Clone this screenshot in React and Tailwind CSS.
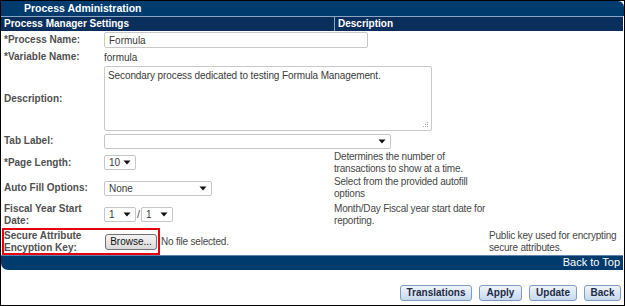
import React from 'react'

const font = { fontFamily: '"Liberation Sans", Arial, sans-serif' }

function Select({ value, width }) {
  return (
    <div
      className={`flex h-[15px] items-center justify-between rounded-[2px] border border-[#c6c6c6] bg-white pl-[4px] pr-[4px] text-[10px] text-[#3a3a3a] ${width}`}
    >
      <span>{value}</span>
      <svg width="8" height="5" viewBox="0 0 8 5">
        <path d="M0.5 0.5 H7.5 L4 4.5 Z" fill="#111" />
      </svg>
    </div>
  )
}

function Label({ children }) {
  return <div className="pl-[3px] text-[10px] font-bold leading-[12px] text-[#505050]">{children}</div>
}

function Desc({ children, className = '' }) {
  return <div className={`text-[10px] leading-[12px] tracking-[-0.2px] text-[#474747] ${className}`}>{children}</div>
}

function ActionButton({ children, width }) {
  return (
    <button
      className={`h-[16px] rounded-[3px] border border-[#7f9cc3] bg-gradient-to-b from-[#eef4fb] to-[#c8d8ed] text-[10px] font-bold leading-[14px] text-[#1d2c44] ${width}`}
    >
      {children}
    </button>
  )
}

export default function App() {
  return (
    <div style={font} className="h-[306px] w-[625px] border border-black bg-white">
      {/* title */}
      <div className="h-[15px] rounded-tr-[6px] bg-[#003b6e] pl-[23px] text-[10.5px] font-bold leading-[15px] text-white">
        Process Administration
      </div>
      <div className="mr-[1px] h-[1px] bg-[#8aa4c3]" />
      <div className="mr-[1px] grid h-[14px] grid-cols-[333px_1fr] bg-[#0b2f5d] text-[10px] font-bold leading-[14px] text-white">
        <div className="pl-[3px]">Process Manager Settings</div>
        <div className="border-l border-[#8aa4c3] pl-[3px]">Description</div>
      </div>

      {/* rows */}
      <div className="grid grid-cols-[103px_230px_1fr]">
        <div className="flex h-[18px] items-center"><Label>*Process Name:</Label></div>
        <div className="col-span-2 flex items-center">
          <div className="flex h-[16px] w-[264px] items-center rounded-[2px] border border-[#c9c9c9] pl-[4px] text-[10px] text-[#3a3a3a]">
            Formula
          </div>
        </div>

        <div className="flex h-[16px] items-center"><Label>*Variable Name:</Label></div>
        <div className="col-span-2 flex items-center text-[10px] text-[#3a3a3a]">formula</div>

        <div className="flex h-[67px] items-center"><Label>Description:</Label></div>
        <div className="col-span-2 flex items-center">
          <div className="relative h-[65px] w-[328px] rounded-[2px] border border-[#c9c9c9] px-[3px] pt-[3px] text-[10px] leading-[12px] tracking-[-0.1px] text-[#3a3a3a]">
            Secondary process dedicated to testing Formula Management.
            <svg className="absolute bottom-[2px] right-[2px]" width="6" height="6" viewBox="0 0 6 6">
              <rect x="4" y="0" width="1" height="1" fill="#aaa" />
              <rect x="2" y="2" width="1" height="1" fill="#aaa" />
              <rect x="4" y="2" width="1" height="1" fill="#aaa" />
              <rect x="0" y="4" width="1" height="1" fill="#aaa" />
              <rect x="2" y="4" width="1" height="1" fill="#aaa" />
              <rect x="4" y="4" width="1" height="1" fill="#aaa" />
            </svg>
          </div>
        </div>

        <div className="flex h-[18px] items-center"><Label>Tab Label:</Label></div>
        <div className="col-span-2 flex items-center">
          <Select value="" width="w-[287px]" />
        </div>

        <div className="flex h-[25px] items-center"><Label>*Page Length:</Label></div>
        <div className="flex items-center"><Select value="10" width="w-[32px]" /></div>
        <div className="flex items-center">
          <Desc>
            Determines the number of<br />transactions to show at a time.
          </Desc>
        </div>

        <div className="flex h-[26px] items-center"><Label>Auto Fill Options:</Label></div>
        <div className="flex items-center"><Select value="None" width="w-[108px]" /></div>
        <div className="flex items-center">
          <Desc>
            Select from the provided autofill<br />options
          </Desc>
        </div>

        <div className="flex h-[27px] items-center">
          <Label>
            Fiscal Year Start<br />Date:
          </Label>
        </div>
        <div className="flex items-center gap-[1px]">
          <Select value="1" width="w-[32px]" />
          <span className="text-[11px] text-[#555]">/</span>
          <Select value="1" width="w-[32px]" />
        </div>
        <div className="flex items-center">
          <Desc>
            Month/Day Fiscal year start date for<br />reporting.
          </Desc>
        </div>

        <div className="relative col-span-3 grid h-[27px] grid-cols-[103px_230px_1fr]">
          <div className="flex items-center">
            <Label>
              Secure Attribute<br />Encyption Key:
            </Label>
          </div>
          <div className="flex items-center gap-[4px] pl-[1px]">
            <button className="h-[16px] w-[52px] rounded-[3px] border border-[#707070] bg-gradient-to-b from-[#f4f4f4] to-[#d9d9d9] text-[10px] leading-[14px] text-[#111]">
              Browse...
            </button>
            <span className="text-[10px] tracking-[-0.2px] text-[#474747]">No file selected.</span>
          </div>
          <div className="flex items-center pl-[155px]">
            <Desc>
              Public key used for encrypting<br />secure attributes.
            </Desc>
          </div>
          <div className="pointer-events-none absolute left-[1px] top-0 h-[27px] w-[158px] border-2 border-[#e4000f]" />
        </div>
      </div>

      {/* footer bar */}
      <div className="mr-[1px] h-[15px] rounded-bl-[7px] border-t border-[#5f84ad] bg-[#003b6e] pr-[3px] text-right text-[11px] leading-[13px] text-white">
        Back to Top
      </div>

      <div className="mt-[15px] flex justify-end gap-[7px] pr-[3px]">
        <ActionButton width="w-[72px]">Translations</ActionButton>
        <ActionButton width="w-[43px]">Apply</ActionButton>
        <ActionButton width="w-[48px]">Update</ActionButton>
        <ActionButton width="w-[37px]">Back</ActionButton>
      </div>
    </div>
  )
}
